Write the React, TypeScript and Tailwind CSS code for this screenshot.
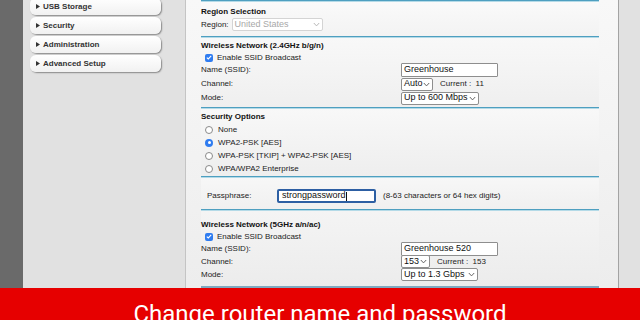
import React from 'react';

const Chevron = ({ color = '#555' }: { color?: string }) => (
  <svg width="7" height="5" viewBox="0 0 7 5" className="shrink-0">
    <path d="M0.8 1 L3.5 3.9 L6.2 1" fill="none" stroke={color} strokeWidth="0.9" />
  </svg>
);

function MenuButton({ label }: { label: string }) {
  return (
    <div className="flex items-center h-[17px] w-[131px] ml-[7px] pl-[6px] gap-[3px] rounded-[6px] bg-gradient-to-b from-white to-[#f1f1f1] shadow-[1px_1px_1.5px_rgba(0,0,0,0.4)]">
      <svg width="4" height="5" viewBox="0 0 4 5"><path d="M0 0 L4 2.5 L0 5 Z" fill="#333" /></svg>
      <span className="text-[8px] font-bold text-[#333]">{label}</span>
    </div>
  );
}

const Line = () => <div className="h-[2px] border-t border-[#4e9fc0] bg-[#b4dae7] shrink-0" />;

function Select({ value, className, disabled }: { value: string; className: string; disabled?: boolean }) {
  return (
    <div
      className={`flex items-center justify-between h-[13px] pl-[2px] pr-[2px] rounded-[2px] bg-white border text-[9px] ${
        disabled ? 'border-[#d4d4d4] text-[#a8a8a8]' : 'border-[#8e8e8e] text-[#111]'
      } ${className}`}
    >
      <span>{value}</span>
      <Chevron color={disabled ? '#b0b0b0' : '#555'} />
    </div>
  );
}

function TextBox({ value, className }: { value: string; className: string }) {
  return (
    <div className={`flex items-center h-[14px] pl-[2px] bg-white border border-[#8e8e8e] rounded-[1px] text-[9px] text-[#111] ${className}`}>
      {value}
    </div>
  );
}

function Radio({ label, checked }: { label: string; checked?: boolean }) {
  return (
    <div className="flex items-center h-[13px] pl-[4px] gap-[5px]">
      {checked ? (
        <div className="w-[8px] h-[8px] rounded-full bg-[#2f7cf0] flex items-center justify-center">
          <div className="w-[3px] h-[3px] rounded-full bg-white" />
        </div>
      ) : (
        <div className="w-[8px] h-[8px] rounded-full bg-white border border-[#8a8a8a]" />
      )}
      <span>{label}</span>
    </div>
  );
}

function Check({ label }: { label: string }) {
  return (
    <div className="flex items-center h-[11px] pl-[4px] gap-[4px]">
      <div className="w-[8px] h-[8px] rounded-[2px] bg-[#2f7cf0] flex items-center justify-center">
        <svg width="6" height="5" viewBox="0 0 6 5"><path d="M0.8 2.6 L2.3 4 L5.2 0.9" fill="none" stroke="white" strokeWidth="1.1" /></svg>
      </div>
      <span>{label}</span>
    </div>
  );
}

function Row({ label, h, children }: { label: string; h: string; children: React.ReactNode }) {
  return (
    <div className={`flex items-center ${h}`}>
      <div className="w-[200px] shrink-0">{label}</div>
      {children}
    </div>
  );
}

function Title({ children }: { children: React.ReactNode }) {
  return <div className="flex items-center h-[12px] font-bold text-[#111]">{children}</div>;
}

export default function App() {
  return (
    <div className="w-[640px] h-[320px] overflow-hidden bg-[#e1e1e1]" style={{ fontFamily: '"Liberation Sans", Arial, sans-serif' }}>
      <div className="flex h-[288px]">
        <div className="w-[23px] bg-[#6a6a6a] shrink-0" />
        <div className="w-[163px] shrink-0 bg-[#e1e1e1] border-r border-[#c4c4c4]">
          <div className="flex flex-col gap-[2px] -mt-[2px]">
            <MenuButton label="USB Storage" />
            <MenuButton label="Security" />
            <MenuButton label="Administration" />
            <MenuButton label="Advanced Setup" />
          </div>
        </div>
        <div className="w-[433px] shrink-0 bg-gradient-to-b from-[#f8f8f8] to-[#ededed] border-r border-[#a3a3a3] pl-[15px] pr-[19px] flex flex-col text-[8px] text-[#222]">
          {/* Region */}
          <Line />
          <div className="pt-[4px] pb-[5px] bg-gradient-to-b from-[#fafafa] to-[#f3f3f3]">
            <Title>Region Selection</Title>
            <div className="flex items-center h-[13px] gap-[3px]">
              <span>Region:</span>
              <Select value="United States" className="w-[91px]" disabled />
            </div>
          </div>

          {/* 2.4GHz */}
          <Line />
          <div className="pt-[2px] pb-[2px] bg-gradient-to-b from-[#f8f8f8] to-[#efefef]">
            <Title>Wireless Network (2.4GHz b/g/n)</Title>
            <Check label="Enable SSID Broadcast" />
            <Row label="Name (SSID):" h="h-[14px]">
              <TextBox value="Greenhouse" className="w-[97px]" />
            </Row>
            <Row label="Channel:" h="h-[14px]">
              <Select value="Auto" className="w-[32px]" />
              <span className="ml-[7px]">Current :&nbsp; 11</span>
            </Row>
            <Row label="Mode:" h="h-[14px]">
              <Select value="Up to 600 Mbps" className="w-[78px]" />
            </Row>
          </div>

          {/* Security */}
          <Line />
          <div className="pt-[2px] pb-[1px] bg-gradient-to-b from-[#f8f8f8] to-[#eeeeee]">
            <Title>Security Options</Title>
            <Radio label="None" />
            <Radio label="WPA2-PSK [AES]" checked />
            <Radio label="WPA-PSK [TKIP] + WPA2-PSK [AES]" />
            <Radio label="WPA/WPA2 Enterprise" />
          </div>

          {/* Passphrase */}
          <Line />
          <div className="pt-[11px] pb-[6px] bg-gradient-to-b from-[#f7f7f7] to-[#f0f0f0]">
            <div className="flex items-center h-[14px] pl-[6px]">
              <span className="w-[70px] shrink-0">Passphrase:</span>
              <div className="flex items-center h-[14px] w-[99px] pl-[3px] bg-white border-2 border-[#2d5fa3] rounded-[2px] text-[9px] text-[#111]">
                strongpassword<span className="w-px h-[9px] bg-[#111]" />
              </div>
              <span className="ml-[7px]">(8-63 characters or 64 hex digits)</span>
            </div>
          </div>

          {/* 5GHz */}
          <Line />
          <div className="pt-[8px] pb-[5px] bg-gradient-to-b from-[#f4f4f4] to-[#ececec]">
            <Title>Wireless Network (5GHz a/n/ac)</Title>
            <Check label="Enable SSID Broadcast" />
            <Row label="Name (SSID):" h="h-[13px]">
              <TextBox value="Greenhouse 520" className="w-[97px]" />
            </Row>
            <Row label="Channel:" h="h-[13px]">
              <Select value="153" className="w-[29px]" />
              <span className="ml-[7px]">Current :&nbsp; 153</span>
            </Row>
            <Row label="Mode:" h="h-[13px]">
              <Select value="Up to 1.3 Gbps" className="w-[77px]" />
            </Row>
          </div>
          <div className="h-[2px] bg-[#7ea9c0]" />
        </div>
        <div className="flex-1 bg-[#e1e1e1]" />
      </div>
      <div className="h-[32px] bg-[#e60000] overflow-hidden pt-[14px] text-center">
        <div className="text-[24px] leading-[24px] text-white" style={{ fontFamily: 'Roboto, sans-serif' }}>
          Change router name and password
        </div>
      </div>
    </div>
  );
}
